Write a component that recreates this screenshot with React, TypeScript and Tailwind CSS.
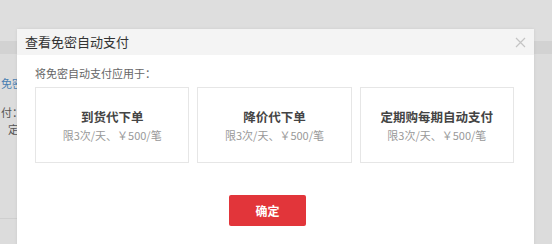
import React from "react";

const options = [
  { title: "到货代下单", limit: "限3次/天、￥500/笔" },
  { title: "降价代下单", limit: "限3次/天、￥500/笔" },
  { title: "定期购每期自动支付", limit: "限3次/天、￥500/笔" },
];

function CloseIcon() {
  return (
    <svg width="11" height="11" viewBox="0 0 11 11" fill="none">
      <path d="M1 1L10 10M10 1L1 10" stroke="#c4c4c4" strokeWidth="1.2" />
    </svg>
  );
}

export default function App() {
  return (
    <div
      className="relative w-[552px] h-[244px] overflow-hidden bg-[#dcdcdc]"
      style={{ fontFamily: '"Noto Sans CJK SC", "Noto Sans", sans-serif' }}
    >
      {/* page behind the mask */}
      <div className="flex flex-col">
        <div className="h-[41px] bg-[#dedede]" />
        <div className="h-[13px] bg-[#d2d2d2]" />
        <div className="flex flex-col text-[11px] leading-none pl-[1px]">
          <span className="mt-[24px] text-[#4a7fb3]">免密</span>
          <span className="mt-[18px] text-[#555]">付：</span>
          <span className="mt-[6px] ml-[7px] text-[#555]">定</span>
        </div>
        <div className="mt-[83px] h-px w-[17px] bg-[#cfcfcf]" />
      </div>

      {/* modal */}
      <div className="absolute left-[17px] top-[29px] w-[517px] h-[230px] bg-white shadow-[0_0_3px_rgba(0,0,0,0.08)]">
        <div className="flex items-center justify-between h-[26px] pl-[8px] pr-[8px] bg-[#f4f4f4]">
          <span className="text-[13px] text-[#333]">查看免密自动支付</span>
          <CloseIcon />
        </div>
        <div className="px-[18px] pt-[11px]">
          <div className="text-[11px] leading-[14px] text-[#666]">将免密自动支付应用于：</div>
          <div className="mt-[7px] grid grid-cols-3 gap-[8px] w-[479px]">
            {options.map((o) => (
              <div
                key={o.title}
                className="h-[76px] border border-[#e6e6e6] flex flex-col items-center justify-center"
              >
                <span className="text-[12.5px] font-bold text-[#444] leading-[16px]">{o.title}</span>
                <span className="mt-[3px] text-[11px] text-[#999] leading-[14px]">{o.limit}</span>
              </div>
            ))}
          </div>
          <button
            type="button"
            className="mt-[32px] ml-[194px] w-[77px] h-[31px] rounded-[2px] bg-[#e2353a] text-white text-[12px] font-bold"
          >
            确定
          </button>
        </div>
      </div>
    </div>
  );
}
